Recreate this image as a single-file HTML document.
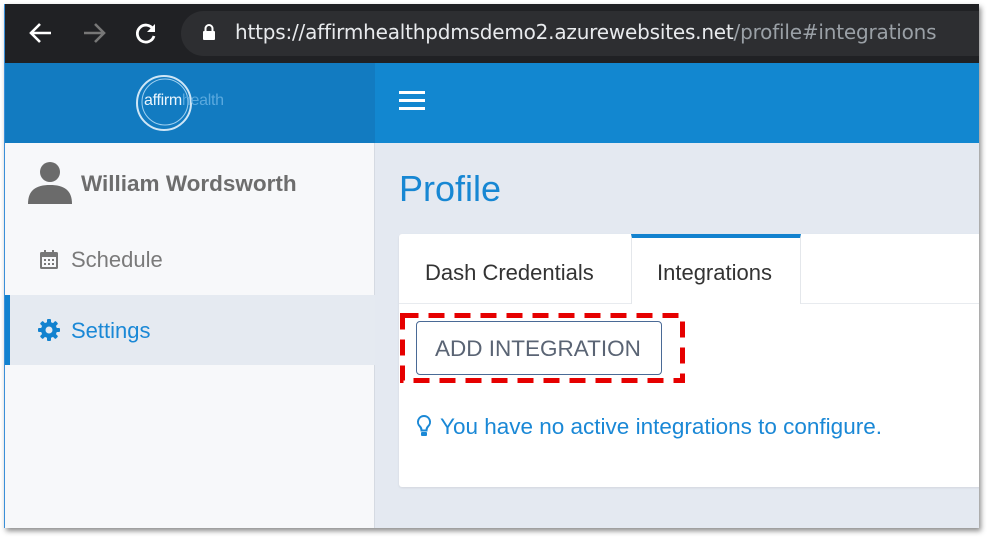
<!DOCTYPE html>
<html><head><style>
*{margin:0;padding:0;box-sizing:border-box}
body{width:992px;height:542px;background:#fff;position:relative;overflow:hidden;font-family:"Liberation Sans",Arial,sans-serif}
#frame{position:absolute;left:4px;top:4px;width:975px;height:524px;overflow:hidden;box-shadow:2px 3px 5px rgba(0,0,0,.45);background:#e4e9f1;border-left:1px solid #3a8fd8}
.chrome{position:absolute;left:0;top:0;width:975px;height:59px;background:#202124}
.url{position:absolute;left:176px;top:7px;width:820px;height:45px;border-radius:23px;background:#2d2e31}
.urltext{position:absolute;left:230px;top:16px;font-family:"DejaVu Sans","Liberation Sans",sans-serif;font-size:20px;color:#e8eaed;letter-spacing:-.2px}
.urltext span{color:#9aa0a6}
.hdrL{position:absolute;left:0;top:59px;width:370px;height:80px;background:#127bc1}
.hdrR{position:absolute;left:370px;top:59px;width:605px;height:80px;background:#1287d0}
.side{position:absolute;left:0;top:139px;width:370px;height:385px;background:#f7f8fa;border-right:1px solid #d5dae2}
.sel{position:absolute;left:0;top:152px;width:370px;height:70px;background:#e5eaf1;border-left:5px solid #1282cf}
.t{position:absolute;white-space:nowrap}
.card{position:absolute;left:394px;top:230px;width:600px;height:253px;background:#fff;border-radius:3px;box-shadow:0 1px 2px rgba(0,0,0,.08)}
</style></head><body>
<div id="frame">
<div class="chrome">
 <svg style="position:absolute;left:24px;top:18px" width="24" height="22" viewBox="0 0 24 22"><path d="M22 11H3M11 2L2 11l9 9" stroke="#fff" stroke-width="2.6" fill="none"/></svg>
 <svg style="position:absolute;left:77px;top:18px" width="24" height="22" viewBox="0 0 24 22"><path d="M2 11h19M13 2l9 9-9 9" stroke="#777" stroke-width="2.6" fill="none"/></svg>
 <svg style="position:absolute;left:129px;top:17px" width="24" height="24" viewBox="0 0 24 24"><path d="M19 8A8.5 8.5 0 1 0 20 15" stroke="#fff" stroke-width="2.8" fill="none"/><path d="M21 3v8h-8z" fill="#fff"/></svg>
 <div class="url"></div>
 <svg style="position:absolute;left:197px;top:20px" width="14" height="17" viewBox="0 0 14 17"><path d="M3.5 7V4.5a3.5 3.5 0 0 1 7 0V7" stroke="#fff" stroke-width="2" fill="none"/><rect x="1" y="7" width="12" height="9" rx="1" fill="#fff"/></svg>
 <div class="urltext">https://affirmhealthpdmsdemo2.azurewebsites.net<span>/profile#integrations</span></div>
</div>
<div class="hdrL">
 <svg style="position:absolute;left:129px;top:10px" width="60" height="60" viewBox="0 0 60 60"><circle cx="30" cy="30" r="27" stroke="#cfe6f6" stroke-width="2" fill="none"/><circle cx="31" cy="29" r="23" stroke="#9fd0f0" stroke-width="1" fill="none"/></svg>
 <div class="t" style="left:139px;top:29px;font-size:16px;color:#eaf5fd;letter-spacing:-.3px">affirm<span style="color:#5aa9de">health</span></div>
</div>
<div class="hdrR">
 <div style="position:absolute;left:24px;top:28px;width:26px;height:3px;background:#fff;box-shadow:0 8px 0 #fff,0 16px 0 #fff"></div>
</div>
<div class="side">
 <svg style="position:absolute;left:22px;top:17px" width="46" height="46" viewBox="0 0 46 46"><circle cx="23" cy="12" r="10" fill="#6b6b6b"/><path d="M1 44c0-14 8-19 22-19s22 5 22 19z" fill="#6b6b6b"/></svg>
 <div class="t" style="left:76px;top:28px;font-size:22.5px;font-weight:bold;color:#6d6d6d">William Wordsworth</div>
 <svg style="position:absolute;left:34px;top:106px" width="20" height="21" viewBox="0 0 20 21"><rect x="1" y="3" width="18" height="17" rx="1.5" fill="#777"/><rect x="3" y="8" width="14" height="10" fill="#f7f8fa"/><rect x="5" y="1" width="2" height="4" fill="#777"/><rect x="13" y="1" width="2" height="4" fill="#777"/><g fill="#777"><rect x="5" y="10" width="2" height="2"/><rect x="9" y="10" width="2" height="2"/><rect x="13" y="10" width="2" height="2"/><rect x="5" y="14" width="2" height="2"/><rect x="9" y="14" width="2" height="2"/><rect x="13" y="14" width="2" height="2"/></g></svg>
 <div class="t" style="left:66px;top:104px;font-size:22px;color:#7a7a7a">Schedule</div>
 <div class="sel"></div>
 <svg style="position:absolute;left:33px;top:176px" width="22" height="22" viewBox="0 0 22 22"><g fill="#1282cf"><circle cx="11" cy="11" r="8"/><rect x="9" y="0" width="4" height="22" rx="1"/><rect x="0" y="9" width="22" height="4" rx="1"/><rect x="9" y="0" width="4" height="22" rx="1" transform="rotate(45 11 11)"/><rect x="9" y="0" width="4" height="22" rx="1" transform="rotate(-45 11 11)"/></g><circle cx="11" cy="11" r="3.5" fill="#e5eaf1"/></svg>
 <div class="t" style="left:66px;top:175px;font-size:22px;color:#1a88d6">Settings</div>
</div>
<div class="t" style="left:394px;top:164px;font-size:36px;color:#1787d3">Profile</div>
<div class="card">
 <div style="position:absolute;left:0;top:69px;width:600px;height:1px;background:#e8ebef"></div>
 <div class="t" style="left:26px;top:26px;font-size:22px;color:#333">Dash Credentials</div>
 <div style="position:absolute;left:232px;top:0;width:170px;height:70px;background:#fff;border-top:4px solid #1282cf;border-left:1px solid #e4e7eb;border-right:1px solid #e4e7eb"></div>
 <div class="t" style="left:258px;top:26px;font-size:22px;color:#333">Integrations</div>
 <svg style="position:absolute;left:1px;top:79px" width="286" height="72" viewBox="0 0 286 72"><rect x="2.5" y="2.5" width="280" height="65" fill="none" stroke="#e60000" stroke-width="5" stroke-dasharray="16 10"/></svg>
 <div style="position:absolute;left:17px;top:87px;width:246px;height:54px;border:1px solid #4a6a96;border-radius:4px"></div>
 <div class="t" style="left:36px;top:102px;font-size:22.5px;color:#5a6474">ADD INTEGRATION</div>
 <svg style="position:absolute;left:17px;top:180px" width="16" height="24" viewBox="0 0 16 24"><path d="M8 2a6 6 0 0 0-4 10.5c1 1 1.5 2.5 1.5 4h5c0-1.5.5-3 1.5-4A6 6 0 0 0 8 2z" stroke="#1a88d6" stroke-width="2" fill="none"/><rect x="5" y="18" width="6" height="4" rx="1" fill="#1a88d6"/></svg>
 <div class="t" style="left:41px;top:180px;font-size:22.5px;color:#1a88d6">You have no active integrations to configure.</div>
</div>
</div>
</body></html>
